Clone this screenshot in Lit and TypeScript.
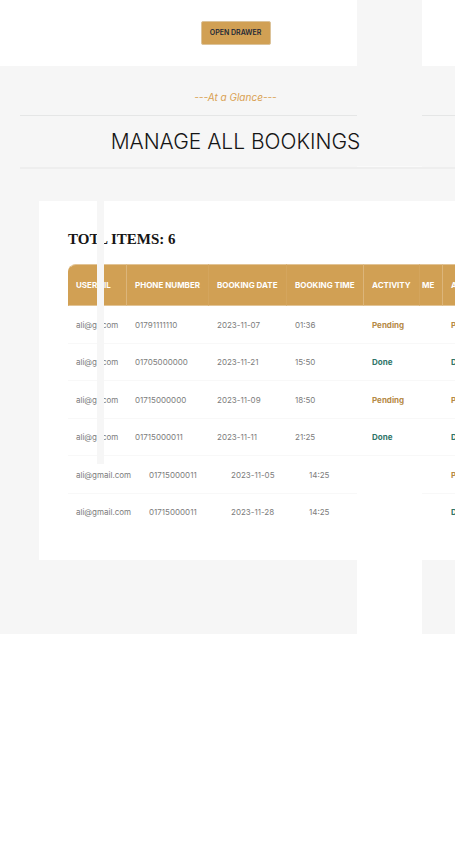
import { LitElement, html, css, nothing } from "lit";
import { customElement, state } from "lit/decorators.js";

interface Booking {
  email: [string, string?];
  phone: string;
  date: string;
  time: string;
  status: "Pending" | "Done";
  shifted?: boolean;
}

@customElement("app-root")
export class AppRoot extends LitElement {
  static styles = css`
    :host {
      display: block;
      position: relative;
      overflow: hidden;
      font-family: Inter, "Liberation Sans", sans-serif;
      background: #fff;
      min-height: 100vh;
    }
    * {
      box-sizing: border-box;
    }
    .topbar {
      display: flex;
      justify-content: center;
      align-items: center;
      height: 66px;
      padding-left: 16px;
    }
    .open {
      height: 24px;
      width: 70px;
      padding: 0;
      border: 1px solid #dcc39a;
      border-radius: 2px;
      background: #d1a054;
      color: #1f2937;
      font: 600 7px/8px Inter, "Liberation Sans", sans-serif;
      white-space: nowrap;
    }
    .bookings {
      background: #f6f6f6;
      padding-bottom: 74px;
    }
    .intro {
      margin-left: 20px;
      padding-top: 23px;
      text-align: center;
    }
    .glance {
      margin: 0;
      padding: 0 4px 10px 0;
      border-bottom: 1px solid #e5e6e6;
      color: #d9a050;
      font-size: 10px;
      line-height: 16px;
      font-style: italic;
    }
    .title {
      position: relative;
      z-index: 2;
      margin: 0;
      padding: 10px 4px 9px 0;
      font-size: 21px;
      line-height: 32px;
      font-weight: 300;
      color: #151515;
    }
    .rule {
      height: 2px;
      background: #eee;
    }
    .card {
      position: relative;
      margin: 32px 0 0 39px;
      padding: 28px 0 29px 29px;
      background: #fff;
    }
    .total {
      display: flex;
      margin: 0 0 15px;
      font: bold 15px/20px "Liberation Serif", serif;
      color: #151515;
      white-space: pre;
    }
    .total .lead {
      width: 30px;
    }
    .split {
      display: flex;
    }
    .split .lead {
      width: 26px;
    }
    th .split .lead {
      width: 28px;
    }
    table {
      width: 100%;
      min-width: 387px;
      table-layout: fixed;
      border-collapse: separate;
      border-spacing: 0;
      font-size: 8px;
      line-height: 12px;
    }
    .c-email { width: 58px; }
    .c-phone { width: 82px; }
    .c-date { width: 78px; }
    .c-time { width: 77px; }
    .c-activity { width: 56px; }
    .c-me { width: 23px; }
    th {
      height: 42px;
      padding: 0 0 0 8px;
      border-left: 1px solid #dcb57a;
      border-top: 1px solid #e2c496;
      border-bottom: 1px solid #e2c496;
      background: #d1a054;
      color: #fff;
      font-weight: 700;
      text-align: left;
      white-space: nowrap;
    }
    th:first-child {
      padding-left: 7px;
      border-top-left-radius: 8px;
      border-left-color: #d1a054;
    }
    th.faint {
      border-left-color: #d4a55d;
    }
    th.me {
      padding-left: 2px;
    }
    td {
      height: 37px;
      padding: 0 0 0 9px;
      border-bottom: 1px solid #f8f8f8;
      color: #7c7c7c;
      white-space: nowrap;
    }
    td:first-child {
      padding-left: 8px;
    }
    tr:nth-child(odd) td {
      height: 38px;
    }
    tr:last-child td {
      border-bottom-color: #fff;
    }
    .shifted td:not(:first-child, .status) {
      padding-left: 23px;
    }
    .status {
      font-weight: 700;
    }
    .pending {
      color: #b58a45;
    }
    .done {
      color: #2f7468;
    }
    .band {
      position: absolute;
      left: 357px;
      width: 65px;
    }
    .band-top {
      top: 0;
      height: 167px;
      background: #f6f6f6;
      border-bottom: 1px solid #fafafa;
    }
    .band-low {
      top: 457px;
      height: 177px;
      background: #fff;
    }
    .bar {
      position: absolute;
      top: 0;
      left: 58px;
      width: 7px;
      height: 263px;
      background: #f6f6f6;
    }
  `;

  @state()
  private bookings: Booking[] = [
    { email: ["ali@g", "com"], phone: "01791111110", date: "2023-11-07", time: "01:36", status: "Pending" },
    { email: ["ali@g", "com"], phone: "01705000000", date: "2023-11-21", time: "15:50", status: "Done" },
    { email: ["ali@g", "com"], phone: "01715000000", date: "2023-11-09", time: "18:50", status: "Pending" },
    { email: ["ali@g", "com"], phone: "01715000011", date: "2023-11-11", time: "21:25", status: "Done" },
    { email: ["ali@gmail.com"], phone: "01715000011", date: "2023-11-05", time: "14:25", status: "Pending", shifted: true },
    { email: ["ali@gmail.com"], phone: "01715000011", date: "2023-11-28", time: "14:25", status: "Done", shifted: true },
  ];

  private renderRow(b: Booking) {
    const tone = b.status === "Done" ? "done" : "pending";
    const [lead, tail] = b.email;
    return html`<tr class=${b.shifted ? "shifted" : ""}>
      <td>
        ${tail
          ? html`<div class="split"><span class="lead">${lead}</span><span>${tail}</span></div>`
          : lead}
      </td>
      <td>${b.phone}</td>
      <td>${b.date}</td>
      <td>${b.time}</td>
      <td class="status ${tone}">${b.shifted ? nothing : b.status}</td>
      <td></td>
      <td class="status ${tone}">${b.status}</td>
    </tr>`;
  }

  render() {
    return html`
      <div class="topbar"><button class="open" type="button">OPEN DRAWER</button></div>
      <main class="bookings">
        <header class="intro">
          <p class="glance">---At a Glance---</p>
          <h1 class="title">MANAGE ALL BOOKINGS</h1>
          <div class="rule"></div>
        </header>
        <section class="card">
          <h2 class="total"><span class="lead">TOT</span><span>L ITEMS: 6</span></h2>
          <table>
            <colgroup>
              <col class="c-email" /><col class="c-phone" /><col class="c-date" />
              <col class="c-time" /><col class="c-activity" /><col class="c-me" /><col />
            </colgroup>
            <thead>
              <tr>
                <th><div class="split"><span class="lead">USER</span><span>IL</span></div></th>
                <th>PHONE NUMBER</th>
                <th class="faint">BOOKING DATE</th>
                <th class="faint">BOOKING TIME</th>
                <th>ACTIVITY</th>
                <th class="me faint">ME</th>
                <th>ACTIVITY</th>
              </tr>
            </thead>
            <tbody>
              ${this.bookings.map((b) => this.renderRow(b))}
            </tbody>
          </table>
          <div class="bar"></div>
        </section>
      </main>
      <div class="band band-top"></div>
      <div class="band band-low"></div>
    `;
  }
}
